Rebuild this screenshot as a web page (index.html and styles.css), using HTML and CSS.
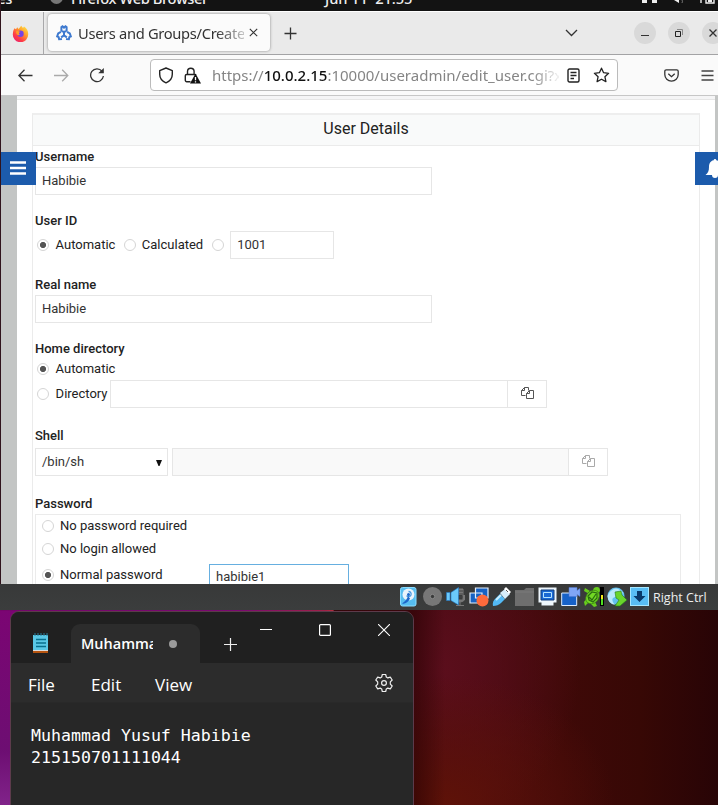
FILE: index.html
```html
<!DOCTYPE html>
<html lang="en">
<head>
<meta charset="utf-8">
<title>Users and Groups/Create User</title>
<link rel="stylesheet" href="styles.css">
</head>
<body>
<main class="desktop">
<section class="vm">
  <div class="screen">
    <header class="topbar">
      <span class="top-activities">Activities</span>
      <i class="top-dot"></i>
      <span class="top-app">Firefox Web Browser</span>
      <span class="top-clock">Jun 11&nbsp; 21:55</span>
      <svg class="top-tray" width="78" height="11" viewBox="0 0 78 11"><path d="M2 0h5v3H2zM12 0h5v3h-5zM34 0l5 3V0z" fill="#eee"/><path d="M42 0q1 1 0 3" stroke="#777" fill="none"/><path d="M61 0v3M66 0v3h8V0" stroke="#eee" fill="none" stroke-width="1.4"/><path d="M68 0h4v2h-4z" fill="#eee"/></svg>
    </header>
    <div class="tabs">
      <div class="pinned">
        <svg width="17" height="17" viewBox="0 0 17 17"><defs><linearGradient id="fox" x1="1" y1="0" x2=".2" y2="1"><stop offset="0" stop-color="#fff44f"/><stop offset=".4" stop-color="#ffa12b"/><stop offset=".75" stop-color="#ff3b45"/><stop offset="1" stop-color="#e82073"/></linearGradient></defs><path d="M2.4 3.2 4 4.2 5.2 2.2 6.6 4 9.2.8 11 3 12 1.5C15 3.6 16.3 6 16.2 9A7.7 7.7 0 1 1 .9 8.4C1 6.2 1.6 4.7 2.4 3.2Z" fill="url(#fox)"/><circle cx="8.500" cy="8.700" r="3.200" fill="#7542e5"/><path d="M4 6.200c2-.8 3.400.3 4.600.9-2.200.2-2 2.300-.6 2.600-1.800 1.400-4.300-.7-4-3.500Z" fill="#ff9a28"/></svg>
      </div>
      <div class="tab">
        <svg width="16" height="16" viewBox="0 0 16 16" fill="none" stroke="#3d79cf" stroke-width="2"><path d="M5.400 2.100v3.400L8 7.200l2.600-1.700V2.100a3 3 0 0 0-1-.8L8 2.600 6.400 1.300a3 3 0 0 0-1 .8ZM8 7.200v3.200l-2.900 1.900M8 10.400l2.900 1.900M4.900 6.800 2.200 8.400 1.200 11.400l1.500.8.400 2 2.900-.3M11.100 6.800l2.700 1.600 1 3-1.500.8-.4 2-2.900-.3"/></svg>
        <span class="tab-title">Users and Groups/Create</span>
        <svg class="tab-x" width="9" height="9" viewBox="0 0 9 9"><path d="m.8.8 7.400 7.400M8.200.8.800 8.200" stroke="#333" stroke-width="1.100"/></svg>
      </div>
      <svg class="newtab" width="13" height="13" viewBox="0 0 13 13"><path d="M6.500.5v12M.5 6.500h12" stroke="#333" stroke-width="1.300"/></svg>
      <svg class="chev" width="13" height="8" viewBox="0 0 13 8"><path d="m1 1 5.500 5.500L12 1" fill="none" stroke="#333" stroke-width="1.300"/></svg>
      <div class="wins">
        <span class="win"><svg width="22" height="22"><path d="M7 13.500h8" stroke="#333"/></svg></span>
        <span class="win"><svg width="22" height="22" fill="none"><path d="M9 7.500h5.500V13" stroke="#888"/><path d="M7.500 9.500h5v5h-5z" stroke="#222"/></svg></span>
        <span class="win"><svg width="22" height="22"><path d="m7.500 7.500 7 7m0-7-7 7" stroke="#333" stroke-width="1.300"/></svg></span>
      </div>
    </div>
    <nav class="toolbar">
      <svg class="t-back" width="15" height="13" viewBox="0 0 15 13" fill="none" stroke="#333" stroke-width="1.300"><path d="M14.500 6.500H1M6.500.8.900 6.500l5.600 5.700"/></svg>
      <svg class="t-fwd" width="15" height="13" viewBox="0 0 15 13" fill="none" stroke="#aaa" stroke-width="1.300"><path d="M0 6.500h13.500M8.200.8l5.600 5.700-5.600 5.700"/></svg>
      <svg class="t-load" width="16" height="16" viewBox="0 0 16 16"><path d="M13 4.200A6.400 6.400 0 1 0 14.400 9" fill="none" stroke="#333" stroke-width="1.300"/><path d="M14.800 1v5.200H9.200Z" fill="#333"/></svg>
      <div class="url">
        <svg class="u-shield" width="16" height="17" viewBox="0 0 16 17"><path d="M8 1 14.300 3.600v3.700c0 3.600-2.600 7-6.300 8.600C4.300 14.300 1.700 10.900 1.700 7.300V3.600Z" fill="none" stroke="#222" stroke-width="1.400" stroke-linejoin="round"/></svg>
        <svg class="u-lock" width="17" height="17" viewBox="0 0 17 17"><path d="M3.500 7.500V4.600a3.300 3.300 0 0 1 6.600 0v2.900M6.500 14.700H2.700a1.400 1.400 0 0 1-1.400-1.400V8.800q0-1.300 1.400-1.300h8q1 0 1.300.7" fill="none" stroke="#222" stroke-width="1.400"/><path d="M11.500 6.500 17 16.500H6Z" fill="#111"/><path d="M11.500 10v3.300m0 1v1.300" stroke="#fff" stroke-width="1.300"/></svg>
        <span class="u-text">https://<b>10.0.2.15</b>:10000/useradmin/edit_user.cgi?x</span>
        <svg class="u-read" width="13" height="15" viewBox="0 0 13 15" fill="none" stroke="#222" stroke-width="1.400"><rect x="1" y="1" width="11" height="13" rx="1.500"/><path d="M3.500 4.500h6M3.500 7.500h6M3.500 10.500h3.500"/></svg>
        <svg class="u-star" width="17" height="16" viewBox="0 0 17 16"><path d="m8.500 1.200 2.100 4.500 5 .6-3.700 3.400 1 4.900-4.400-2.400-4.400 2.400 1-4.900L1.400 6.300l5-.6Z" fill="none" stroke="#222" stroke-width="1.300" stroke-linejoin="round"/></svg>
      </div>
      <svg class="t-pocket" width="15" height="13" viewBox="0 0 15 13" fill="none" stroke="#333" stroke-width="1.300"><path d="M2.300.8h10.400q1.500 0 1.500 1.500v3.200a6.700 6.700 0 0 1-13.400 0V2.300Q.8.800 2.300.8ZM4.300 4.700l3.200 3 3.200-3"/></svg>
      <svg class="t-menu" width="13" height="11" viewBox="0 0 13 11"><path d="M.5 1h12M.5 5.500h12M.5 10h12" stroke="#444" stroke-width="1.300"/></svg>
    </nav>
    <div class="page">
      <div class="sheet">
        <form class="panel">
          <h1>User Details</h1>
          <div class="fields">
            <section class="group"><h2>Username</h2><div class="row"><span class="input wide">Habibie</span></div></section>
            <section class="group"><h2>User ID</h2><div class="row"><i class="radio on"></i><span class="opt first">Automatic</span><i class="radio second"></i><span class="opt">Calculated</span><i class="radio second"></i><span class="input uid">1001</span></div></section>
            <section class="group"><h2>Real name</h2><div class="row"><span class="input wide">Habibie</span></div></section>
            <section class="group"><h2>Home directory</h2><div class="row auto"><i class="radio on"></i><span class="opt first">Automatic</span></div><div class="row"><i class="radio"></i><span class="opt first">Directory</span><span class="input dir"></span><span class="pick"><svg width="13" height="13" viewBox="0 0 13 13" fill="none" stroke="#555"><path d="M4.500 8.500h-4v-5l3-3h4v3M3.500.5v3h-3M5.500 6.500l3-3h4v8h-7v-5M8.500 3.500v3h-3"/></svg></span></div></section>
            <section class="group shell"><h2>Shell</h2><div class="row"><span class="input select">/bin/sh<svg width="6" height="6"><path d="M0 0h6L3.500 6h-1Z" fill="#111"/></svg></span><span class="input off"></span><span class="pick dim"><svg width="13" height="13" viewBox="0 0 13 13" fill="none" stroke="#555"><path d="M4.500 8.500h-4v-5l3-3h4v3M3.500.5v3h-3M5.500 6.500l3-3h4v8h-7v-5M8.500 3.500v3h-3"/></svg></span></div></section>
            <section class="group password"><h2>Password</h2><div class="box">
              <div class="row p1"><i class="radio"></i><span class="opt">No password required</span></div>
              <div class="row p2"><i class="radio"></i><span class="opt">No login allowed</span></div>
              <div class="row p3"><i class="radio on"></i><span class="opt">Normal password</span><span class="input focus">habibie1</span></div>
            </div></section>
          </div>
        </form>
      </div>
      <div class="side-btn left"><svg width="16" height="14"><path d="M0 1.500h16M0 7h16M0 12.500h16" stroke="#fff" stroke-width="2.500"/></svg></div>
      <div class="side-btn right"><svg width="20" height="19" viewBox="0 0 20 19"><path d="M10 0q1.300 0 1.300 1.300C15 2 16 5 16 8c0 4 1 6 3.500 8H13a3 3 0 0 1-6 0H.5C3 14 4 12 4 8c0-3 1-6 4.700-6.700Q8.700 0 10 0Z" fill="#fff"/></svg></div>
    </div>
  </div>
  <footer class="status">
    <svg width="20" height="20" viewBox="0 0 20 20"><rect x=".5" y=".5" width="15.500" height="18.500" rx="2" fill="#56bdf0" stroke="#8bdcff"/><circle cx="8.500" cy="7.500" r="6" fill="#e9f3fb"/><path d="M8.500 4.500a2.600 2.600 0 1 1-2 4.200" stroke="#4b9be0" stroke-width="1.300" fill="none"/><circle cx="8.500" cy="7.500" r="1.500" fill="#1d66c9"/><path d="M8 9q-1 4-6 7.500 5 1 8-5Z" fill="#1d66c9"/></svg>
    <svg width="20" height="20" viewBox="0 0 20 20"><circle cx="9.500" cy="9.500" r="9.500" fill="#777"/><circle cx="9.500" cy="9.500" r="2.200" fill="#3a3b3b" stroke="#8a8a8a"/></svg>
    <svg width="20" height="20" viewBox="0 0 20 20"><path d="M11 2h6v11h-6zM10 8v5q0 2 3.500 2T18.500 13V8M14 15v4M10 18.500h8" fill="#777" stroke="#777"/><path d="M13 4h4M13 7h4M13 10h4" stroke="#444"/><path d="M.5 5.500h3.500v8H.5zM5 5.500 12.500.5V18L5 13.500Z" fill="#6bc9fa" stroke="#2378c7" stroke-width=".6"/></svg>
    <svg width="20" height="20" viewBox="0 0 20 20"><path d="M6.500 1h12.500v10H6.500zM1 6h12v10H1z" fill="#1762c4" stroke="#e6effa" stroke-width="1.200"/><circle cx="13.500" cy="13.500" r="6" fill="#ff6a3c"/></svg>
    <svg width="20" height="20" viewBox="0 0 20 20"><path d="M1 19q-1-5 3-8l4-4 5 5-4 4q-3 3-8 3Z" fill="#53b9f5"/><path d="m4 13 5-5" stroke="#c9f0ff" stroke-width="2"/><path d="m8 6 5-4 5 5-5 5Z" fill="#d7edfa"/><path d="m12 2 2-2 5 5-2 2Z" fill="#fff"/><path d="m14 3 2 2" stroke="#555"/></svg>
    <svg width="20" height="20" viewBox="0 0 20 20"><path d="M0 3h9l2-2h8v18H0Z" fill="#6e6e6e"/><path d="M0 5h19" stroke="#7b7b7b"/></svg>
    <svg width="20" height="20" viewBox="0 0 20 20"><path d="M.5.500h18v15h-3v3h-12v-3h-3Z" fill="#eef6fc"/><path d="M3 3h13v10H3Z" fill="#1a69d4" stroke="#123f7c"/><path d="M5.500 5.500h8v5h-8Z" fill="none" stroke="#b7e4ff"/></svg>
    <svg width="20" height="20" viewBox="0 0 20 20"><path d="M.7 6h15v12.500H.7Z" fill="#1762c8" stroke="#dcecff"/><path d="M8 .500h8v3l3-2v8l-3-2v2H8Z" fill="#80a6f6" stroke="#5378d0" stroke-width=".5"/></svg>
    <svg width="20" height="20" viewBox="0 0 20 20"><path d="M3.500 6 0 4 1 1l5 3M2 12l-2 3 1 4 4-4M9 4q0-4 4-4 3 0 3 4l-2 3M6 16l4 4 3-1-2-4" fill="#67cc1d"/><ellipse cx="8.500" cy="10" rx="7.500" ry="6" transform="rotate(-45 8.500 10)" fill="#72d824" stroke="#377f12" stroke-width=".7"/><path d="m4 9 4-4 5 1v5l-4 4-4-2Zm1 1 3 3 4-6" fill="none" stroke="#2a6c10" stroke-width="1.200"/><path d="M16 0h4v19h-4Z" fill="#000"/><path d="M17 10h2v8h-2z" fill="#50e020"/><path d="M17 8h2v4h-2z" fill="#f2e61e"/></svg>
    <svg width="20" height="20" viewBox="0 0 20 20"><circle cx="9" cy="9" r="8.500" fill="#61c0ef"/><path d="M2 6q7-9 14 0L6 11q-2 3 2 7Q1 17 .500 9Z" fill="#b9e9fc"/><path d="m8 5 6-1 1 4 5 5-7 6H8l4-6-3-2Z" fill="#69d52c" stroke="#247a19" stroke-width=".6"/></svg>
    <svg width="20" height="20" viewBox="0 0 20 20"><rect x=".5" y=".5" width="18" height="18" fill="#58bdf4" stroke="#a5e7ff"/><path d="M7 4h5v5h3.500l-6 6-6-6H7Z" fill="#08396a"/></svg>
    <span class="hostkey">Right Ctrl</span>
  </footer>
</section>
<section class="notepad">
  <header class="np-title">
    <svg class="np-icon" width="17" height="20" viewBox="0 0 17 20"><path d="M1 17h15v3H1Z" fill="#b65410"/><path d="M1 2h15v15H1Z" fill="#5ac8e6"/><path d="M1 17.500h15" stroke="#ddd"/><path d="M3 0v3m3-3v3m3-3v3m3-3v3m3-3v3" stroke="#267e9b"/><path d="M4 6.500h10M4 10h10M4 13.500h10" stroke="#08708e" stroke-width="1.600"/></svg>
    <div class="np-tab"><span>Muhammad</span><i></i></div>
    <svg class="np-plus" width="13" height="13"><path d="M6.500 0v13M0 6.500h13" stroke="#eee" stroke-width="1.200"/></svg>
    <div class="np-win">
      <svg width="12" height="12"><path d="M0 5.500h12" stroke="#fff"/></svg>
      <svg width="12" height="12"><rect x=".6" y=".6" width="10.800" height="10.800" rx="1" fill="none" stroke="#fff" stroke-width="1.200"/></svg>
      <svg width="12" height="12"><path d="m0 0 12 12M12 0 0 12" stroke="#fff" stroke-width="1.100"/></svg>
    </div>
  </header>
  <nav class="np-menu"><span class="m1">File</span><span class="m2">Edit</span><span class="m3">View</span>
    <svg width="20" height="20" viewBox="0 0 20 20" fill="none" stroke="#eee" stroke-width="1.200"><circle cx="10" cy="10" r="2.400"/><path d="m8.300 1.500h3.400l.6 2.500 1.500.9 2.500-.8 1.900 2.900-1.900 1.900v2.200l1.900 1.900-1.900 2.900-2.500-.8-1.500.9-.6 2.500H8.300L7.700 16l-1.500-.9-2.500.8-1.900-2.900 1.900-1.900V8.900L1.800 7l1.900-2.900 2.500.8L7.700 4Z" stroke-linejoin="round"/></svg>
  </nav>
  <pre class="np-text">Muhammad Yusuf Habibie
215150701111044</pre>
</section>
</main>
</body>
</html>
```
FILE: styles.css
```css
* { box-sizing: border-box; }
body { margin: 0; }
svg { display: block; flex: none; }
.desktop { position: relative; width: 718px; height: 805px; overflow: hidden; background:
  linear-gradient(90deg, #74056a 0, #7b0870 240px, #a02048 325px, #b32c3c 333px, #4b0b20 334px, transparent 334px) 0 0 / 718px 611px no-repeat,
  linear-gradient(#7b0573, #6d0e72 140px, #81238a) 0 610px / 20px 195px no-repeat,
  linear-gradient(90deg, #2008 413px, #2000 445px),
  radial-gradient(ellipse 170px 130px at 445px 805px, #5e1208, #5e120800),
  radial-gradient(ellipse 140px 160px at 440px 670px, #5b0e1c, #5b0e1c00),
  linear-gradient(90deg, #480a12 430px, #3f0908 560px, #370805 640px, #280406 718px); }
.vm { position: absolute; inset: 0 0 auto; height: 610px; }
.screen { height: 584px; border-left: 1px solid #30131c; overflow: hidden; background: #fff; display: flex; flex-direction: column; }
.topbar { height: 11px; flex: none; background: #131313; color: #eee; font: 500 14.700px/18px "Noto Sans", sans-serif; letter-spacing: -.4px; display: flex; overflow: hidden; }
.topbar span { margin-top: -11px; white-space: nowrap; flex: none; }
.top-activities { width: 11px; direction: rtl; }
.top-dot { width: 13px; height: 13px; border-radius: 50%; background: #777; margin: -9px 8px 0 38px; flex: none; }
.top-app { width: 254px; }
.top-clock { width: 315px; letter-spacing: -.1px; }
.tabs { height: 44px; flex: none; display: flex; background: #eaeaea; border-top: 1px solid #fff; border-bottom: 1px solid #a3a3a5; }
.pinned { width: 43px; flex: none; border-right: 1px solid #a8a8aa; padding: 13px 0 0 11px; }
.tab { width: 222px; flex: none; height: 37px; margin: 2px 0 0 4px; background: #fbfbfb; border-radius: 4px; box-shadow: 0 0 3px #888; display: flex; align-items: center; padding-left: 8px; }
.tab-title { font: 14.700px "Noto Sans", sans-serif; letter-spacing: -.32px; width: 166px; flex: none; margin-left: 6px; white-space: nowrap; overflow: hidden; color: #333; mask-image: linear-gradient(90deg, #000 138px, #0004 166px); }
.tab-x { margin-left: 5px; }
.newtab { margin: 15px 0 0 14px; }
.chev { margin: 17px 0 0 268px; }
.wins { display: flex; gap: 12px; margin: 10px 0 0 56px; }
.win { width: 22px; height: 22px; border-radius: 50%; background: #d9d9d9; flex: none; }
.toolbar { height: 40px; flex: none; display: flex; background: #fafafa; align-items: center; }
.t-back { margin-left: 17px; }
.t-fwd { margin-left: 21px; }
.t-load { margin-left: 20px; }
.url { width: 468px; height: 32px; margin-left: 45px; border: 1px solid #bbb; border-radius: 4px; background: #fff; display: flex; align-items: center; flex: none; }
.u-shield { margin-left: 7px; }
.u-lock { margin-left: 10px; }
.u-text { width: 347px; flex: none; margin-left: 11px; white-space: nowrap; overflow: hidden; font: 15px "Noto Sans", sans-serif; color: #858585; mask-image: linear-gradient(90deg, #000 320px, #0002 346px); }
.u-text b { font-weight: 500; color: #111; }
.u-read { margin-left: 8px; }
.u-star { margin-left: 13px; }
.t-pocket { margin-left: 46px; }
.t-menu { margin-left: 22px; }
.page { position: relative; height: 489px; background: #c3c5c4; border-top: 1px solid #c7c7c7; }
.sheet { margin: 0 3px 0 16px; height: 488px; background: #fff; border-top: 3px solid #f5f5f6; padding: 14px 15px 0; box-shadow: inset 0 1px #e6e6e6; }
.panel { width: 668px; height: 600px; border: 1px solid #ebebeb; border-top: 2px solid #eee; font: 13px Roboto, sans-serif; color: #222; }
.panel h1 { margin: 0; height: 31px; font: 16px/28px Roboto, sans-serif; text-align: center; background: #f9fafa; border-bottom: 1px solid #ebebeb; }
.fields { padding-left: 2px; }
.group { margin-bottom: 15px; }
.group h2 { margin: 0; font: 500 13px/21px Roboto, sans-serif; height: 21px; }
.shell h2 { height: 25px; line-height: 25px; }
.password h2 { height: 23px; line-height: 25px; }
.row { display: flex; height: 28px; align-items: center; }
.row.auto { height: 21px; padding-bottom: 2px; }
.radio { width: 12px; height: 12px; border: 1px solid #d5d5d5; border-radius: 50%; margin: 0 6px 0 2px; flex: none; background: #fff; }
.radio.on { background: radial-gradient(circle, #555 2.700px, #fff 3.500px); }
.radio.second { margin-left: 9px; }
.row:not(.auto) > .radio { margin-top: -1px; }
.opt { margin-top: -1px; }
.auto .opt { margin-top: 0; }
.opt.first { margin-left: .6px; margin-right: -.6px; }
.input { height: 28px; border: 1px solid #e6e6e6; padding-left: 6px; font: 13px/26px Roboto, sans-serif; color: #333; background: #fff; flex: none; }
.wide { width: 397px; }
.uid { width: 104px; }
.dir { width: 398px; margin-left: 3px; }
.pick { width: 39px; height: 28px; border: 1px solid #e6e6e6; border-left: 0; padding: 6px 0 0 13px; flex: none; }
.dim svg { opacity: .5; }
.select { width: 133px; display: flex; align-items: center; justify-content: space-between; padding-right: 5px; }
.select svg { margin-top: 2px; }
.off { width: 397px; margin-left: 4px; background: #f9f9f9; }
.box { width: 646px; height: 100px; border: 1px solid #ebebeb; padding-left: 4px; }
.row.p1 { height: 22px; }
.row.p2 { height: 24px; }
.row.p3 { height: 29px; }
.p3 .opt { width: 149px; margin-top: -2px; }
.input.focus { width: 140px; border-color: #66afe0; margin-top: 4px; line-height: 24px; }
.side-btn { position: absolute; top: 56px; height: 33px; background: #1c5bac; }
.left { left: 0; width: 35px; padding: 9px; }
.right { right: 0; width: 23px; overflow: hidden; padding: 7px 10px; }
.status { height: 26px; background: linear-gradient(#383939, #3b3d3d); display: flex; gap: 3px; padding: 3px 0 0 400px; }
.hostkey { color: #eee; font: 12.500px/22px "Open Sans", sans-serif; white-space: nowrap; }
.notepad { position: absolute; left: 10px; top: 611px; width: 404px; height: 210px; border: 1px solid #5c3b4b; border-radius: 9px; background: #272727; color: #fff; overflow: hidden; font-family: "Open Sans", sans-serif; }
.np-title { height: 51px; background: #202020; display: flex; }
.np-icon { margin: 21px 0 0 21px; }
.np-tab { width: 129px; height: 39px; margin: 12px 0 0 22px; background: #2c2c2c; border-radius: 9px 9px 0 0; display: flex; align-items: center; padding-left: 10px; }
.np-tab span { width: 72px; overflow: hidden; font-size: 14.500px; font-weight: 600; }
.np-tab i { width: 8px; height: 8px; border-radius: 50%; background: #9b9b9b; margin-left: 16px; }
.np-plus { margin: 26px 0 0 24px; }
.np-win { display: flex; gap: 47px; margin: 12px 0 0 23px; }
.np-menu { height: 40px; background: #2c2c2c; border-bottom: 1px solid #292929; display: flex; align-items: center; font-size: 17px; }
.np-menu span { padding-top: 3px; }
.m1 { margin-left: 17px; width: 63px; }
.m2 { width: 64px; }
.m3 { width: 219px; }
.np-menu svg { margin-top: 1px; }
.np-text { margin: 0; padding: 22px 0 0 20px; font: 16.600px/22px "DejaVu Sans Mono", monospace; }
```
